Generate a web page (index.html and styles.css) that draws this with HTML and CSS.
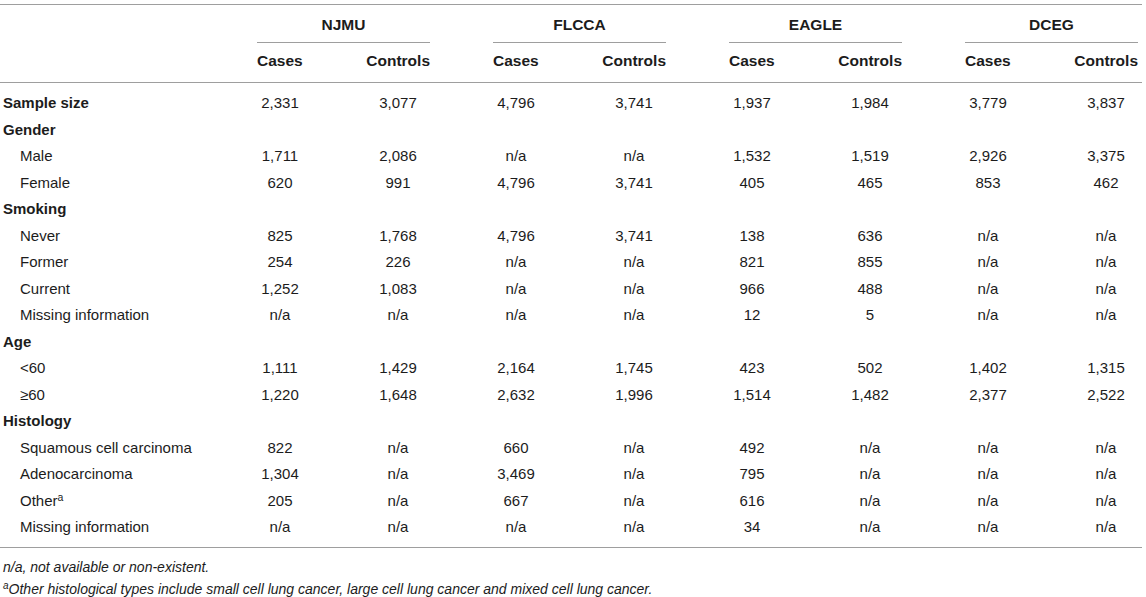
FILE: index.html
```html
<!DOCTYPE html>
<html lang="en">
<head>
<meta charset="utf-8">
<title>Study populations</title>
<link rel="stylesheet" href="styles.css">
</head>
<body>
<div class="page">
  <div class="table">
    <div class="head">
      <div class="row groups">
        <div class="label"></div>
        <div class="group">NJMU</div>
        <div class="group">FLCCA</div>
        <div class="group">EAGLE</div>
        <div class="group">DCEG</div>
      </div>
      <div class="row sub">
        <div class="label"></div>
        <div class="cases">Cases</div><div class="controls">Controls</div>
        <div class="cases">Cases</div><div class="controls">Controls</div>
        <div class="cases">Cases</div><div class="controls">Controls</div>
        <div class="cases">Cases</div><div class="controls">Controls</div>
      </div>
    </div>
    <div class="body">
      <div class="row"><div class="label cat">Sample size</div><div class="v">2,331</div><div class="v">3,077</div><div class="v">4,796</div><div class="v">3,741</div><div class="v">1,937</div><div class="v">1,984</div><div class="v">3,779</div><div class="v">3,837</div></div>
      <div class="row"><div class="label cat">Gender</div></div>
      <div class="row"><div class="label sub-item">Male</div><div class="v">1,711</div><div class="v">2,086</div><div class="v">n/a</div><div class="v">n/a</div><div class="v">1,532</div><div class="v">1,519</div><div class="v">2,926</div><div class="v">3,375</div></div>
      <div class="row"><div class="label sub-item">Female</div><div class="v">620</div><div class="v">991</div><div class="v">4,796</div><div class="v">3,741</div><div class="v">405</div><div class="v">465</div><div class="v">853</div><div class="v">462</div></div>
      <div class="row"><div class="label cat">Smoking</div></div>
      <div class="row"><div class="label sub-item">Never</div><div class="v">825</div><div class="v">1,768</div><div class="v">4,796</div><div class="v">3,741</div><div class="v">138</div><div class="v">636</div><div class="v">n/a</div><div class="v">n/a</div></div>
      <div class="row"><div class="label sub-item">Former</div><div class="v">254</div><div class="v">226</div><div class="v">n/a</div><div class="v">n/a</div><div class="v">821</div><div class="v">855</div><div class="v">n/a</div><div class="v">n/a</div></div>
      <div class="row"><div class="label sub-item">Current</div><div class="v">1,252</div><div class="v">1,083</div><div class="v">n/a</div><div class="v">n/a</div><div class="v">966</div><div class="v">488</div><div class="v">n/a</div><div class="v">n/a</div></div>
      <div class="row"><div class="label sub-item">Missing information</div><div class="v">n/a</div><div class="v">n/a</div><div class="v">n/a</div><div class="v">n/a</div><div class="v">12</div><div class="v">5</div><div class="v">n/a</div><div class="v">n/a</div></div>
      <div class="row"><div class="label cat">Age</div></div>
      <div class="row"><div class="label sub-item">&lt;60</div><div class="v">1,111</div><div class="v">1,429</div><div class="v">2,164</div><div class="v">1,745</div><div class="v">423</div><div class="v">502</div><div class="v">1,402</div><div class="v">1,315</div></div>
      <div class="row"><div class="label sub-item">≥60</div><div class="v">1,220</div><div class="v">1,648</div><div class="v">2,632</div><div class="v">1,996</div><div class="v">1,514</div><div class="v">1,482</div><div class="v">2,377</div><div class="v">2,522</div></div>
      <div class="row"><div class="label cat">Histology</div></div>
      <div class="row"><div class="label sub-item">Squamous cell carcinoma</div><div class="v">822</div><div class="v">n/a</div><div class="v">660</div><div class="v">n/a</div><div class="v">492</div><div class="v">n/a</div><div class="v">n/a</div><div class="v">n/a</div></div>
      <div class="row"><div class="label sub-item">Adenocarcinoma</div><div class="v">1,304</div><div class="v">n/a</div><div class="v">3,469</div><div class="v">n/a</div><div class="v">795</div><div class="v">n/a</div><div class="v">n/a</div><div class="v">n/a</div></div>
      <div class="row"><div class="label sub-item">Other<sup class="sup">a</sup></div><div class="v">205</div><div class="v">n/a</div><div class="v">667</div><div class="v">n/a</div><div class="v">616</div><div class="v">n/a</div><div class="v">n/a</div><div class="v">n/a</div></div>
      <div class="row"><div class="label sub-item">Missing information</div><div class="v">n/a</div><div class="v">n/a</div><div class="v">n/a</div><div class="v">n/a</div><div class="v">34</div><div class="v">n/a</div><div class="v">n/a</div><div class="v">n/a</div></div>
    </div>
  </div>
  <div class="notes">
    <p class="note">n/a, not available or non-existent.</p>
    <p class="note"><sup class="note-sup">a</sup>Other histological types include small cell lung cancer, large cell lung cancer and mixed cell lung cancer.</p>
  </div>
</div>
</body>
</html>
```
FILE: styles.css
```css
html, body {
  margin: 0;
  padding: 0;
  background: #ffffff;
}

body {
  font-family: "Liberation Sans", Arial, Helvetica, sans-serif;
  color: #1c1c1c;
}

.page {
  padding-top: 4px;
  width: 1142px;
}

.table {
  border-top: 1px solid #9e9e9e;
}

.row {
  display: grid;
  grid-template-columns: 194px 46px 64px 46px 64px 46px 64px 46px 64px;
  column-gap: 63px;
  line-height: 26.5px;
  font-size: 15px;
}

.head {
  border-bottom: 1px solid #9e9e9e;
}

.groups {
  padding-top: 7px;
}

.group {
  grid-column: span 2;
  text-align: center;
  font-weight: bold;
  font-size: 15.5px;
  padding-bottom: 3px;
  border-bottom: 1px solid #9e9e9e;
}

.sub {
  padding-top: 5px;
  padding-bottom: 8px;
  font-weight: bold;
  font-size: 15.5px;
}

.cases {
  text-align: left;
  white-space: nowrap;
}

.controls {
  text-align: right;
  white-space: nowrap;
}

.body {
  padding-top: 7px;
  padding-bottom: 6px;
  border-bottom: 1px solid #9e9e9e;
}

.label {
  padding-left: 3px;
  white-space: nowrap;
}

.cat {
  font-weight: bold;
}

.sub-item {
  padding-left: 20px;
}

.v {
  text-align: center;
  white-space: nowrap;
}

.sup {
  font-size: 10.5px;
  vertical-align: 5px;
  line-height: 0;
}

.notes {
  padding-top: 8px;
  padding-left: 3px;
}

.note {
  margin: 0;
  font-size: 14px;
  font-style: italic;
  line-height: 22px;
  color: #1c1c1c;
}

.note-sup {
  font-size: 10px;
  vertical-align: 5px;
  line-height: 0;
}
```
